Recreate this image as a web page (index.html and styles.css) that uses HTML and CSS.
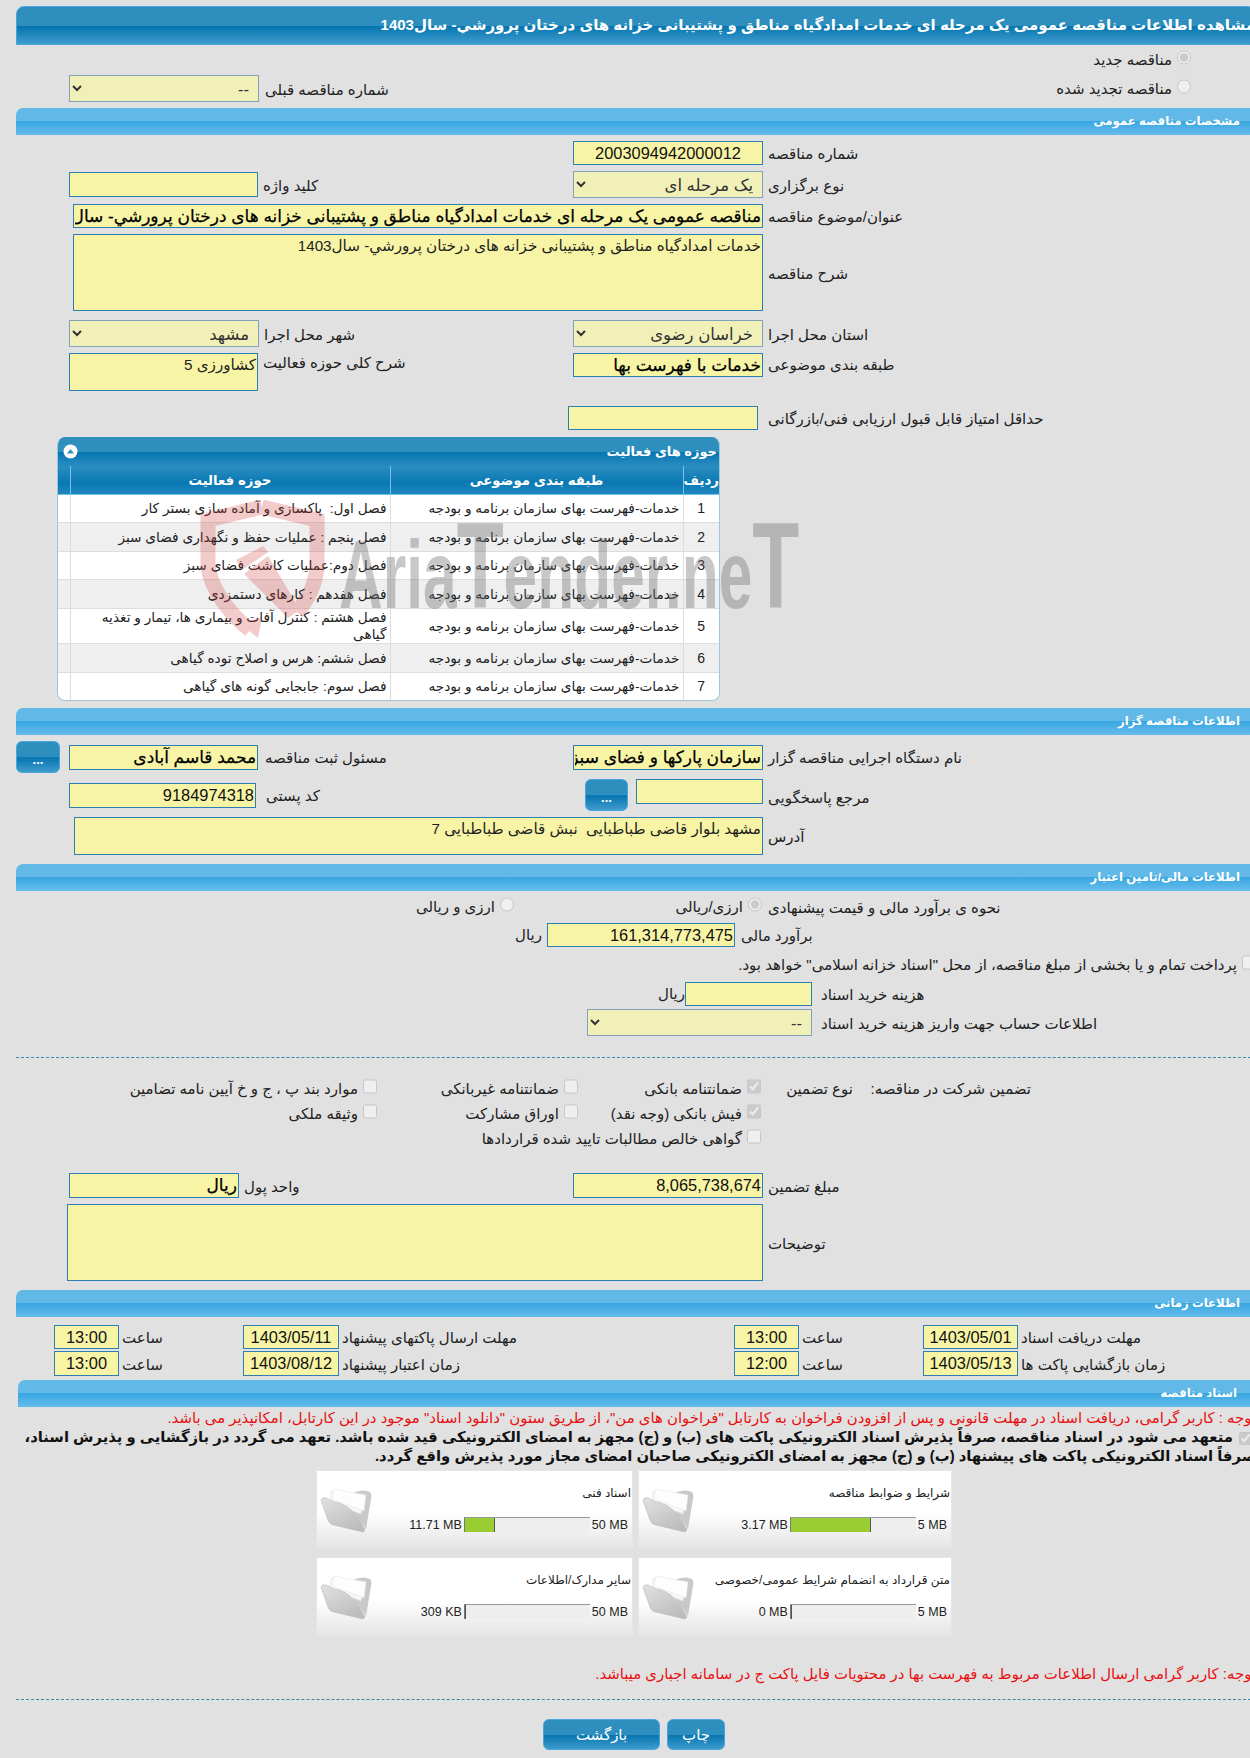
FILE: index.html
```html
<!DOCTYPE html>
<html lang="fa">
<head>
    <meta charset="UTF-8">
    <title>مشاهده اطلاعات مناقصه</title>
    <link rel="stylesheet" href="styles.css">
</head>
<body>
<svg class="defs" width="0" height="0">
    <defs>
        <linearGradient id="flap" x1="0" y1="0" x2="0.6" y2="1">
            <stop offset="0" stop-color="#e2e2e2"/>
            <stop offset="1" stop-color="#bdbdbd"/>
        </linearGradient>
        <symbol id="folder" viewBox="0 0 52 46">
            <path d="M35 5 Q44 2 50 5 Q52 7 51 12 L46 42 L30 20 Z" fill="#c9c9c9"/>
            <path d="M11 4 L43 13 L41 27 L10 15 Z" fill="#f7f7f7" stroke="#e4e4e4" stroke-width="0.6"/>
            <path d="M14 2 L46 8 L44 24 L12 12 Z" fill="#fdfdfd" stroke="#e6e6e6" stroke-width="0.6"/>
            <path d="M1 13 Q2 10 6 11 L14 15 Q24 16 33 25 Q38 30 45 43 L43 45 L14 38 Q10 38 8 33 Z" fill="url(#flap)" stroke="#b5b5b5" stroke-width="0.6"/>
        </symbol>
    </defs>
</svg>

<div class="page">
    <div class="title-bar" dir="rtl">مشاهده اطلاعات مناقصه عمومی یک مرحله ای خدمات امدادگیاه مناطق و پشتیبانی خزانه های درختان پرورشي- سال1403</div>

    <div class="type-row">
        <div class="prev-tender">
            <select class="sel w190" dir="rtl" disabled><option>--</option></select>
            <span class="lbl">شماره مناقصه قبلی</span>
        </div>
        <div class="type-radios" dir="rtl">
            <label class="choice"><input type="radio" name="kind" checked disabled>مناقصه جدید</label>
            <label class="choice"><input type="radio" name="kind" disabled>مناقصه تجدید شده</label>
        </div>
    </div>

    <div class="sec-bar" dir="rtl">مشخصات مناقصه عمومی</div>

    <div class="row mt6">
        <div class="left"></div>
        <div class="right"><input class="fld num mid w190 h24" dir="rtl" value="2003094942000012" readonly><span class="lbl">شماره مناقصه</span></div>
    </div>
    <div class="row mt6 center h27">
        <div class="left"><input class="fld w189 h25" dir="rtl" readonly><span class="lbl">کلید واژه</span></div>
        <div class="right"><select class="sel w190" dir="rtl" disabled><option>یک مرحله ای</option></select><span class="lbl">نوع برگزاری</span></div>
    </div>
    <div class="wide-row mt6">
        <input class="fld bold wide-title h24" dir="rtl" value="مناقصه عمومی یک مرحله ای خدمات امدادگیاه مناطق و پشتیبانی خزانه های درختان پرورشي- سال1403" readonly>
        <span class="lbl">عنوان/موضوع مناقصه</span>
    </div>
    <div class="wide-row mt6">
        <textarea class="fld wide-title h77" dir="rtl" readonly>خدمات امدادگیاه مناطق و پشتیبانی خزانه های درختان پرورشي- سال1403</textarea>
        <span class="lbl">شرح مناقصه</span>
    </div>
    <div class="row mt9 center h27">
        <div class="left"><select class="sel w190" dir="rtl" disabled><option>مشهد</option></select><span class="lbl">شهر محل اجرا</span></div>
        <div class="right"><select class="sel w190" dir="rtl" disabled><option>خراسان رضوی</option></select><span class="lbl">استان محل اجرا</span></div>
    </div>
    <div class="row mt6 top">
        <div class="left"><textarea class="fld w189 h38" dir="rtl" readonly>کشاورزی 5</textarea><span class="lbl">شرح کلی حوزه فعالیت</span></div>
        <div class="right"><input class="fld bold w190 h24" dir="rtl" value="خدمات با فهرست بها" readonly><span class="lbl">طبقه بندی موضوعی</span></div>
    </div>
    <div class="score-row">
        <input class="fld w190 h24" dir="rtl" readonly>
        <span class="lbl">حداقل امتیاز قابل قبول ارزیابی فنی/بازرگانی</span>
    </div>

    <div class="panel">
        <div class="panel-head" dir="rtl">
            <span>حوزه های فعالیت</span>
            <svg class="toggle" width="15" height="15" viewBox="0 0 15 15"><circle cx="7.5" cy="7.5" r="7" fill="#fff"/><path d="M4 9.5 L7.5 5 L11 9.5 Z" fill="#2d8fbf"/></svg>
        </div>
        <table class="grid" dir="rtl">
            <colgroup><col class="c1"><col class="c2"><col class="c3"><col class="c4"></colgroup>
            <thead>
                <tr><th>ردیف</th><th>طبقه بندی موضوعی</th><th>حوزه فعالیت</th><th></th></tr>
            </thead>
            <tbody>
                <tr class="r28"><td class="n">1</td><td>خدمات-فهرست بهای سازمان برنامه و بودجه</td><td>فصل اول: &nbsp;پاکسازی و آماده سازی بستر کار</td><td></td></tr>
                <tr class="r29 alt"><td class="n">2</td><td>خدمات-فهرست بهای سازمان برنامه و بودجه</td><td>فصل پنجم : عملیات حفظ و نگهداری فضای سبز</td><td></td></tr>
                <tr class="r28"><td class="n">3</td><td>خدمات-فهرست بهای سازمان برنامه و بودجه</td><td>فصل دوم:عملیات کاشت فضای سبز</td><td></td></tr>
                <tr class="r29 alt"><td class="n">4</td><td>خدمات-فهرست بهای سازمان برنامه و بودجه</td><td>فصل هفدهم : کارهای دستمزدی</td><td></td></tr>
                <tr class="r35"><td class="n">5</td><td>خدمات-فهرست بهای سازمان برنامه و بودجه</td><td>فصل هشتم : کنترل آفات و بیماری ها، تیمار و تغذیه گیاهی</td><td></td></tr>
                <tr class="r29 alt"><td class="n">6</td><td>خدمات-فهرست بهای سازمان برنامه و بودجه</td><td>فصل ششم: هرس و اصلاح توده گیاهی</td><td></td></tr>
                <tr class="r28"><td class="n">7</td><td>خدمات-فهرست بهای سازمان برنامه و بودجه</td><td>فصل سوم: جابجایی گونه های گیاهی</td><td></td></tr>
            </tbody>
        </table>
    </div>

    <div class="sec-bar mt7" dir="rtl">اطلاعات مناقصه گزار</div>
    <div class="row mt6 center h32">
        <div class="left flush"><button class="btn dots">...</button><input class="fld bold w189 h25" dir="rtl" value="محمد قاسم آبادی" readonly><span class="lbl lbl-far">مسئول ثبت مناقصه</span></div>
        <div class="right"><input class="fld bold w190 h25" dir="rtl" value="سازمان پارکها و فضای سبز" readonly><span class="lbl">نام دستگاه اجرایی مناقصه گزار</span></div>
    </div>
    <div class="row mt6 h32">
        <div class="left left-post"><input class="fld num w187 h25" dir="rtl" value="9184974318" readonly><span class="lbl">کد پستی</span></div>
        <div class="right right-ref"><button class="btn dots dots-ref">...</button><input class="fld w127 h25" dir="rtl" readonly><span class="lbl lbl-ref">مرجع پاسخگویی</span></div>
    </div>
    <div class="wide-row addr-row mt6">
        <textarea class="fld addr h38" dir="rtl" readonly>مشهد بلوار قاضی طباطبایی  نبش قاضی طباطبایی 7</textarea>
        <span class="lbl">آدرس</span>
    </div>

    <div class="sec-bar mt9" dir="rtl">اطلاعات مالی/تامین اعتبار</div>
    <div class="estimate-row">
        <label class="choice box1" dir="rtl"><input type="radio" name="cur" disabled>ارزی و ریالی</label>
        <label class="choice box2" dir="rtl"><input type="radio" name="cur" checked disabled>ارزی/ریالی</label>
        <span class="lbl">نحوه ی برآورد مالی و قیمت پیشنهادی</span>
    </div>
    <div class="budget-row">
        <span class="unit">ریال</span>
        <input class="fld num budget h24" dir="rtl" value="161,314,773,475" readonly>
        <span class="lbl">برآورد مالی</span>
    </div>
    <label class="choice treasury" dir="rtl"><input type="checkbox" disabled>پرداخت تمام و یا بخشی از مبلغ مناقصه، از محل "اسناد خزانه اسلامی" خواهد بود.</label>
    <div class="fee-row">
        <span class="unit unit-fee">ریال</span>
        <input class="fld w127 h24" dir="rtl" readonly>
        <span class="lbl">هزینه خرید اسناد</span>
    </div>
    <div class="acct-row">
        <select class="sel acct" dir="rtl" disabled><option>--</option></select>
        <span class="lbl">اطلاعات حساب جهت واریز هزینه خرید اسناد</span>
    </div>

    <div class="dash dash-a"></div>

    <div class="guarantee" dir="rtl">
        <span>تضمین شرکت در مناقصه:</span>
        <span>نوع تضمین</span>
        <label class="choice"><input type="checkbox" checked disabled>ضمانتنامه بانکی</label>
        <label class="choice"><input type="checkbox" disabled>ضمانتنامه غیربانکی</label>
        <label class="choice"><input type="checkbox" disabled>موارد بند پ ، ج و خ آیین نامه تضامین</label>
        <span></span>
        <span></span>
        <label class="choice"><input type="checkbox" checked disabled>فیش بانکی (وجه نقد)</label>
        <label class="choice"><input type="checkbox" disabled>اوراق مشارکت</label>
        <label class="choice"><input type="checkbox" disabled>وثیقه ملکی</label>
        <span></span>
        <span></span>
        <label class="choice g-wide"><input type="checkbox" disabled>گواهی خالص مطالبات تایید شده قراردادها</label>
    </div>

    <div class="row center h25 amount-row">
        <div class="left"><input class="fld bold w170 h25" dir="rtl" value="ریال" readonly><span class="lbl">واحد پول</span></div>
        <div class="right"><input class="fld num w190 h25" dir="rtl" value="8,065,738,674" readonly><span class="lbl">مبلغ تضمین</span></div>
    </div>
    <div class="wide-row notes-row mt6">
        <textarea class="fld notes h77" dir="rtl" readonly></textarea>
        <span class="lbl">توضیحات</span>
    </div>

    <div class="sec-bar mt9" dir="rtl">اطلاعات زمانی</div>
    <div class="times">
        <input class="fld num mid h24" dir="rtl" value="13:00" readonly><span class="lbl">ساعت</span>
        <input class="fld num mid h24" dir="rtl" value="1403/05/11" readonly><span class="lbl">مهلت ارسال پاکتهای پیشنهاد</span>
        <input class="fld num mid h24" dir="rtl" value="13:00" readonly><span class="lbl">ساعت</span>
        <input class="fld num mid h24" dir="rtl" value="1403/05/01" readonly><span class="lbl">مهلت دریافت اسناد</span>
        <input class="fld num mid h25" dir="rtl" value="13:00" readonly><span class="lbl">ساعت</span>
        <input class="fld num mid h25" dir="rtl" value="1403/08/12" readonly><span class="lbl">زمان اعتبار پیشنهاد</span>
        <input class="fld num mid h25" dir="rtl" value="12:00" readonly><span class="lbl">ساعت</span>
        <input class="fld num mid h25" dir="rtl" value="1403/05/13" readonly><span class="lbl">زمان بازگشایی پاکت ها</span>
    </div>

    <div class="sec-bar docs-bar" dir="rtl">اسناد مناقصه</div>
    <div class="notice" dir="rtl">توجه : کاربر گرامی، دریافت اسناد در مهلت قانونی و پس از افزودن فراخوان به کارتابل "فراخوان های من"، از طریق ستون "دانلود اسناد" موجود در این کارتابل، امکانپذیر می باشد.</div>
    <div class="pledge" dir="rtl"><input type="checkbox" checked disabled> متعهد می شود در اسناد مناقصه، صرفاً پذیرش اسناد الکترونیکی پاکت های (ب) و (ج) مجهز به امضای الکترونیکی قید شده باشد. تعهد می گردد در بازگشایی و پذیرش اسناد،<br>صرفاً اسناد الکترونیکی پاکت های پیشنهاد (ب) و (ج) مجهز به امضای الکترونیکی صاحبان امضای مجاز مورد پذیرش واقع گردد.</div>

    <div class="cards">
        <div class="card">
            <svg class="folder"><use href="#folder"/></svg>
            <div class="card-body">
                <div class="card-title" dir="rtl">اسناد فنی</div>
                <div class="quota"><span class="used">11.71 MB</span><div class="bar"><div class="fill" style="width:24%"></div></div><span class="cap">50 MB</span></div>
            </div>
        </div>
        <div class="card">
            <svg class="folder"><use href="#folder"/></svg>
            <div class="card-body">
                <div class="card-title" dir="rtl">شرایط و ضوابط مناقصه</div>
                <div class="quota"><span class="used">3.17 MB</span><div class="bar"><div class="fill" style="width:64%"></div></div><span class="cap">5 MB</span></div>
            </div>
        </div>
        <div class="card">
            <svg class="folder"><use href="#folder"/></svg>
            <div class="card-body">
                <div class="card-title" dir="rtl">سایر مدارک/اطلاعات</div>
                <div class="quota"><span class="used">309 KB</span><div class="bar"><div class="fill" style="width:1%"></div></div><span class="cap">50 MB</span></div>
            </div>
        </div>
        <div class="card">
            <svg class="folder"><use href="#folder"/></svg>
            <div class="card-body">
                <div class="card-title" dir="rtl">متن قرارداد به انضمام شرایط عمومی/خصوصی</div>
                <div class="quota"><span class="used">0 MB</span><div class="bar"><div class="fill" style="width:0"></div></div><span class="cap">5 MB</span></div>
            </div>
        </div>
    </div>

    <div class="notice notice-b" dir="rtl">توجه: کاربر گرامی ارسال اطلاعات مربوط به فهرست بها در محتویات فایل پاکت ج در سامانه اجباری میباشد.</div>
    <div class="dash dash-b"></div>
    <div class="actions">
        <button class="btn back">بازگشت</button>
        <button class="btn print">چاپ</button>
    </div>
</div>

<!-- watermark over the activity table -->
<div class="watermark">
    <svg class="wm-shield" width="125" height="138" viewBox="0 0 125 138">
        <path d="M62 7 L8 20 L8 66 C11 90 30 114 50 130" fill="none" stroke="#d23c3c" stroke-width="15"/>
        <path d="M62 7 L117 20 L117 68 C115 85 108 100 97 112" fill="none" stroke="#d23c3c" stroke-width="15"/>
        <path d="M38 122 L62 118 L58 138 Z" fill="#d23c3c"/>
        <path d="M36 60 L63 46 L68 52 L42 70 Z M44 74 L68 56 L100 110 L88 118 Z" fill="#d23c3c"/>
    </svg>
    <span class="wm-text">Aria<span class="wm-t">T</span>ender.ne<span class="wm-t">T</span></span>
</div>
</body>
</html>
```

FILE: styles.css
```css
html, body {
    margin: 0;
    padding: 0;
    height: 1758px;
    overflow: hidden;
}
body {
    position: relative;
    background-color: #e1e1e1;
    font-family: "Liberation Sans", "DejaVu Sans", sans-serif;
    font-size: 15px;
    color: #222;
}
.defs {
    position: absolute;
}
.page {
    width: 1240px;
    margin-left: 16px;
}

/* bars */
.title-bar {
    box-sizing: border-box;
    margin-top: 6px;
    height: 39px;
    line-height: 36px;
    padding-right: 0;
    white-space: nowrap;
    overflow: hidden;
    color: #fff;
    font-weight: bold;
    font-size: 15px;
    border: 1px solid #4aa3dc;
    border-radius: 8px 8px 0 0;
    background: linear-gradient(#2e8fbe 0, #2e8fbe 50%, #0575b0 52%, #3f9ccd 100%);
}
.sec-bar {
    box-sizing: border-box;
    height: 27px;
    line-height: 26px;
    padding-right: 16px;
    color: #fff;
    font-weight: bold;
    font-size: 11.7px;
    border-radius: 7px 7px 0 0;
    background: linear-gradient(#62b9e8 0, #62b9e8 48%, #39a6e0 50%, #66bdec 100%);
}
.docs-bar {
    margin-top: 4px;
    margin-left: 2px;
    width: 1238px;
    padding-right: 19px;
}

/* spacing and sizes */
.mt6 { margin-top: 6px; }
.mt7 { margin-top: 7px; }
.mt9 { margin-top: 9px; }
.h24 { height: 24px; }
.h25 { height: 25px; }
.h27 { height: 27px; }
.h32 { height: 32px; }
.h38 { height: 38px; }
.h77 { height: 77px; }
.w127 { width: 127px; }
.w170 { width: 170px; }
.w187 { width: 187px; }
.w189 { width: 189px; }
.w190 { width: 190px; }

/* form parts */
.row {
    display: flex;
}
.row.center {
    align-items: center;
}
.row.top {
    align-items: flex-start;
}
.left {
    display: flex;
    align-items: center;
    gap: 5px;
    width: 504px;
    margin-left: 53px;
    flex: none;
}
.top .left {
    align-items: flex-start;
}
.left.flush {
    width: 557px;
    margin-left: 0;
}
.right {
    display: flex;
    align-items: center;
    gap: 5px;
}
.lbl {
    white-space: nowrap;
    direction: rtl;
    line-height: 20px;
    padding-top: 2px;
}
.top .lbl {
    padding-top: 0;
}
.lbl-far {
    margin-left: 2px;
}
.fld, .sel {
    box-sizing: border-box;
    margin: 0;
    padding: 0 1px;
    font-family: inherit;
    font-size: 15.2px;
    color: #222;
    background-color: #f7f5a5;
    border: 1px solid #2b7fb5;
    border-radius: 0;
    outline: none;
    resize: none;
    display: block;
    overflow: hidden;
}
.num {
    font-size: 16.4px;
    color: #111;
}
.mid {
    text-align: center;
}
.bold {
    font-size: 17px;
    color: #000;
    -webkit-text-stroke: 0.25px #000;
}
.sel {
    height: 27px;
    padding: 0 5px;
    font-size: 16.5px;
    color: #333;
    background-color: #f2f0b9;
    border-color: #7fa3b8;
    opacity: 1;
}
textarea.fld {
    padding-top: 2px;
}

.type-row {
    display: flex;
    justify-content: space-between;
    height: 63px;
}
.prev-tender {
    display: flex;
    align-items: center;
    gap: 6px;
    margin: 30px 0 0 53px;
    height: 27px;
}
.type-radios {
    display: flex;
    flex-direction: column;
    gap: 7px;
    margin: 4px 65px 0 0;
}
.choice {
    display: flex;
    align-items: center;
    gap: 5px;
    white-space: nowrap;
    line-height: 22px;
}
.choice input {
    width: 14px;
    height: 15px;
    margin: 0 0 5px 0;
    flex: none;
}

.wide-row {
    display: flex;
    align-items: center;
    gap: 5px;
    margin-left: 57px;
}
.wide-title {
    width: 690px;
}
.addr-row {
    margin-left: 58px;
}
.addr {
    width: 689px;
}
.notes-row {
    margin-left: 51px;
}
.notes {
    width: 696px;
}
.score-row {
    display: flex;
    align-items: center;
    gap: 10px;
    margin: 15px 0 0 552px;
}

/* activity panel */
.panel {
    width: 663px;
    height: 264px;
    margin: 7px 0 0 41px;
    box-sizing: border-box;
    background: #fff;
    border: 1px solid #9fc6df;
    border-top: 0;
    border-radius: 8px;
    overflow: hidden;
}
.panel-head {
    display: flex;
    justify-content: space-between;
    align-items: center;
    height: 29px;
    padding: 0 2px 0 5px;
    color: #fff;
    font-weight: bold;
    font-size: 13px;
    background: linear-gradient(#2e8fbe 0, #2e8fbe 50%, #0575b0 52%, #2a8cc0 100%);
}
.toggle {
    display: block;
}
.grid {
    width: 100%;
    table-layout: fixed;
    border-collapse: collapse;
}
.c1 { width: 36px; }
.c2 { width: 293px; }
.c3 { width: 320px; }
.c4 { width: 12px; }
.grid th {
    height: 28px;
    padding: 0;
    color: #fff;
    font-size: 13.3px;
    border-right: 1px solid #7dbfe6;
    background: linear-gradient(#2a8ec0 0, #0a78b2 60%, #1f87bd 100%);
    border-bottom: 1px solid #6ac3ee;
}
.grid th:first-child {
    border-right: 0;
}
.grid td {
    padding: 0 3px 0 0;
    font-size: 13.7px;
    line-height: 17px;
    border-bottom: 1px solid #ddd;
    border-right: 1px solid #ddd;
    text-align: right;
}
.grid td:first-child {
    border-right: 0;
}
.grid td:last-child {
    padding: 0;
}
.grid td.n {
    padding: 0;
    text-align: center;
    font-size: 14px;
}
.alt td {
    background-color: #efefef;
}
.r28 { height: 28px; }
.r29 { height: 29px; }
.r35 { height: 35px; }

/* reference row */
.left-post {
    gap: 10px;
    height: 32px;
}
.right-ref {
    align-items: flex-start;
    gap: 8px;
    margin-left: 12px;
}
.lbl-ref {
    margin: 7px 0 0 -3px;
}

/* financial */
.estimate-row {
    display: flex;
    align-items: center;
    height: 22px;
    margin-top: 5px;
}
.box1 {
    width: 114px;
    margin-left: 384px;
    flex: none;
}
.box2 {
    width: 248px;
    flex: none;
}
.estimate-row .lbl {
    margin-left: 6px;
}
.budget-row, .fee-row, .acct-row {
    display: flex;
    align-items: center;
}
.budget-row {
    margin-top: 5px;
}
.unit {
    flex: none;
    box-sizing: border-box;
    width: 531px;
    padding-right: 5px;
    text-align: right;
    direction: rtl;
}
.budget {
    width: 188px;
    margin-right: 6px;
}
.treasury {
    height: 20px;
    margin: 8px 0 0 0;
}
.fee-row {
    margin-top: 7px;
}
.unit-fee {
    width: 669px;
    padding-right: 0;
}
.fee-row .fld, .acct {
    margin-right: 9px;
}
.acct-row {
    margin: 3px 0 0 571px;
}
.acct {
    width: 225px;
}
.dash {
    border-top: 1px dashed #3a86b0;
}
.dash-a {
    margin-top: 21px;
}

/* guarantee */
.guarantee {
    display: grid;
    grid-template-columns: 178px 92px 183px 201px auto;
    grid-auto-rows: 25px;
    align-items: center;
    height: 73px;
    margin-top: 18px;
    padding-right: 225px;
    white-space: nowrap;
}
.g-wide {
    grid-column: span 3;
}
.amount-row {
    margin-top: 24px;
}

/* times */
.times {
    display: grid;
    grid-template-columns: 65px 124px 96px 395px 65px 124px 95px auto;
    grid-template-rows: 24px 25px;
    row-gap: 2px;
    padding-left: 38px;
    margin-top: 8px;
    align-items: center;
}
.times .lbl {
    padding-left: 3px;
    text-align: left;
    direction: rtl;
    unicode-bidi: plaintext;
}

/* documents */
.notice {
    height: 20px;
    line-height: 22px;
    color: #e81010;
    font-size: 14.9px;
    white-space: nowrap;
}
.pledge {
    height: 40px;
    margin-top: 1px;
    font-weight: bold;
    font-size: 14.8px;
    line-height: 19px;
    color: #111;
    white-space: nowrap;
}
.pledge input {
    margin: 0 4px 0 2px;
    vertical-align: middle;
}
.cards {
    display: grid;
    grid-template-columns: 317px 314px;
    grid-template-rows: 78px 79px;
    column-gap: 5px;
    row-gap: 9px;
    margin: 2px 0 0 300px;
}
.card {
    display: flex;
    background: linear-gradient(#fff 0, #fff 55%, #e5e5e5 100%);
    border: 1px solid #e6e6e6;
    box-sizing: border-box;
}
.folder {
    flex: none;
    width: 52px;
    height: 46px;
    margin: 16px 0 0 3px;
}
.card-body {
    flex: 1;
    padding-right: 1px;
}
.card-title {
    margin-top: 12px;
    line-height: 20px;
    font-size: 12px;
    white-space: nowrap;
}
.quota {
    display: flex;
    justify-content: flex-end;
    align-items: center;
    gap: 2px;
    margin: 14px 3px 0 0;
    font-size: 12.5px;
    white-space: nowrap;
}
.bar {
    width: 126px;
    height: 15px;
    box-sizing: border-box;
    background: #eee;
    border-top: 1px solid #999;
    border-left: 1px solid #777;
}
.fill {
    height: 100%;
    box-sizing: border-box;
    background: #9acd32;
    border-right: 1px solid #555;
}
.notice-b {
    margin-top: 27px;
}
.dash-b {
    margin-top: 16px;
}

/* buttons */
.btn {
    display: block;
    box-sizing: border-box;
    padding: 0;
    font-family: inherit;
    color: #fff;
    border: 1px solid #48a5de;
    border-radius: 6px;
    background: linear-gradient(#2e8fbe 0, #2e8fbe 50%, #0575b0 52%, #3f9ccd 100%);
}
.dots {
    width: 44px;
    height: 32px;
    margin-right: 4px;
    padding-top: 5px;
    font-weight: bold;
    font-size: 13px;
    flex: none;
}
.dots-ref {
    width: 43px;
    margin-right: 0;
}
.actions {
    display: flex;
    gap: 7px;
    margin: 19px 0 0 527px;
}
.back {
    width: 117px;
    height: 31px;
    font-size: 15px;
}
.print {
    width: 58px;
    height: 31px;
    font-size: 15px;
}

/* watermark */
.watermark {
    position: absolute;
    left: 200px;
    top: 500px;
    pointer-events: none;
}
.wm-shield {
    position: absolute;
    left: 0;
    top: 0;
    opacity: 0.26;
}
.wm-text {
    position: absolute;
    left: 139px;
    top: 16px;
    font-family: "Liberation Sans", sans-serif;
    font-weight: bold;
    font-size: 96px;
    line-height: 100px;
    white-space: nowrap;
    color: rgba(110, 110, 110, 0.38);
    transform: scaleX(0.63);
    transform-origin: left top;
}
.wm-t {
    font-size: 122px;
}
```
